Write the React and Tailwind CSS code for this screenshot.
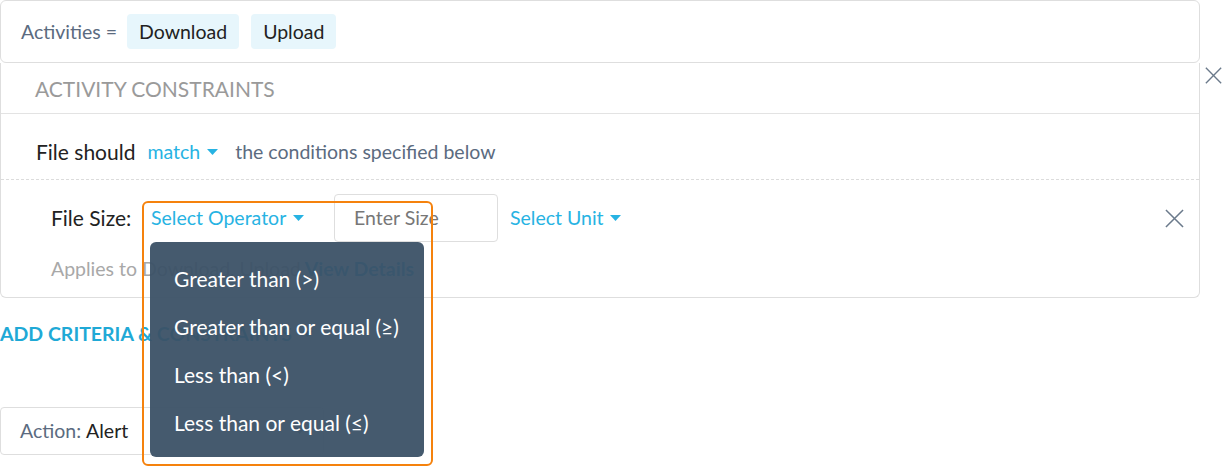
import React from 'react';

const Caret = ({ className = '' }) => (
  <svg width="11" height="6" viewBox="0 0 11 6" className={className}>
    <path d="M0 0h11L5.5 6z" fill="currentColor" />
  </svg>
);

const Cross = ({ size = 20, className = '' }) => (
  <svg width={size} height={size} viewBox="0 0 20 20" className={className}>
    <path d="M1 1L19 19M19 1L1 19" stroke="currentColor" strokeWidth="1.6" fill="none" />
  </svg>
);

const operators = [
  'Greater than (>)',
  'Greater than or equal (≥)',
  'Less than (<)',
  'Less than or equal (≤)',
];

export default function App() {
  return (
    <div className="relative w-[1225px] h-[466px] bg-white overflow-hidden text-[19.5px] text-[#222]" style={{ fontFamily: 'Lato, "Open Sans", sans-serif' }}>
      <div className="w-[1200px]">
        {/* activities */}
        <div className="h-[63px] border border-[#dedede] rounded-md flex items-center pl-[20px] gap-3">
          <span className="text-[#5b6b80] -mr-[2px]">Activities =</span>
          <span className="bg-[#e7f6fc] rounded px-[12px] h-[35px] flex items-center">Download</span>
          <span className="bg-[#e7f6fc] rounded px-[12px] h-[35px] flex items-center">Upload</span>
        </div>

        {/* constraints card */}
        <div className="relative border border-t-0 border-[#dedede] rounded-b-md">
          <button className="absolute -right-[23px] top-[4px] text-[#6b7a8b]">
            <Cross size={17} />
          </button>
          <div className="h-[51px] border-b border-[#e3e3e3] flex items-center pl-[34px] pt-[2px] text-[21px] text-[#9a9a9a]">
            ACTIVITY CONSTRAINTS
          </div>
          <div className="h-[66px] border-b border-dashed border-[#dcdcdc] flex items-center pl-[35px] pt-[10px]">
            <span className="text-[21px]">File should</span>
            <span className="ml-3 text-[#27b3e3] flex items-center gap-[7px]">match <Caret /></span>
            <span className="ml-[17px] text-[#5b6b80]">the conditions specified below</span>
          </div>
          <div className="pl-[50px] pt-[14px] pb-[16px]">
            <div className="flex items-center h-[48px]">
              <span className="w-[100px] text-[21px]">File Size:</span>
              <span className="w-[183px] text-[#27b3e3] flex items-center gap-[7px]">Select Operator <Caret /></span>
              <div className="w-[164px] h-[48px] border border-[#dedede] rounded flex items-center pl-[19px] text-[#777]">Enter Size</div>
              <span className="ml-[12px] text-[#27b3e3] flex items-center gap-[6px]">Select Unit <Caret /></span>
              <button className="ml-auto mr-[15px] text-[#6b7a8b]">
                <Cross size={19} />
              </button>
            </div>
            <div className="mt-[14px] h-[25px] flex items-center text-[#a8a8a8]">
              Applies to Download, Upload <span className="ml-[4px] text-[#27b3e3] font-bold">View Details</span>
            </div>
          </div>
        </div>

        <div className="mt-[24px] h-[24px] flex items-center gap-[10px] text-[#1fa9d6] font-bold text-[19.5px]">
          ADD CRITERIA &amp; CONSTRAINTS <Caret className="text-[#1fa9d6]" />
        </div>

        <div className="mt-[61px] w-[324px] h-[48px] border border-[#dedede] rounded flex items-center pl-[19px] pr-[18px]">
          <span className="text-[#5b6b80]">Action:</span>
          <span className="ml-[5px]">Alert</span>
          <Caret className="ml-auto text-[#8a95a2]" />
        </div>
      </div>

      {/* highlight around operator select */}
      <div className="absolute left-[142px] top-[201px] w-[291px] h-[265px] border-2 border-[#f5820d] rounded-md" />

      {/* operator menu */}
      <ul className="absolute left-[150px] top-[242px] w-[274px] h-[215px] bg-[#3b5166]/95 rounded-md pt-[13px] text-white text-[21px]">
        {operators.map((op) => (
          <li key={op} className="h-[48px] flex items-center pl-[24px]">{op}</li>
        ))}
      </ul>
    </div>
  );
}
